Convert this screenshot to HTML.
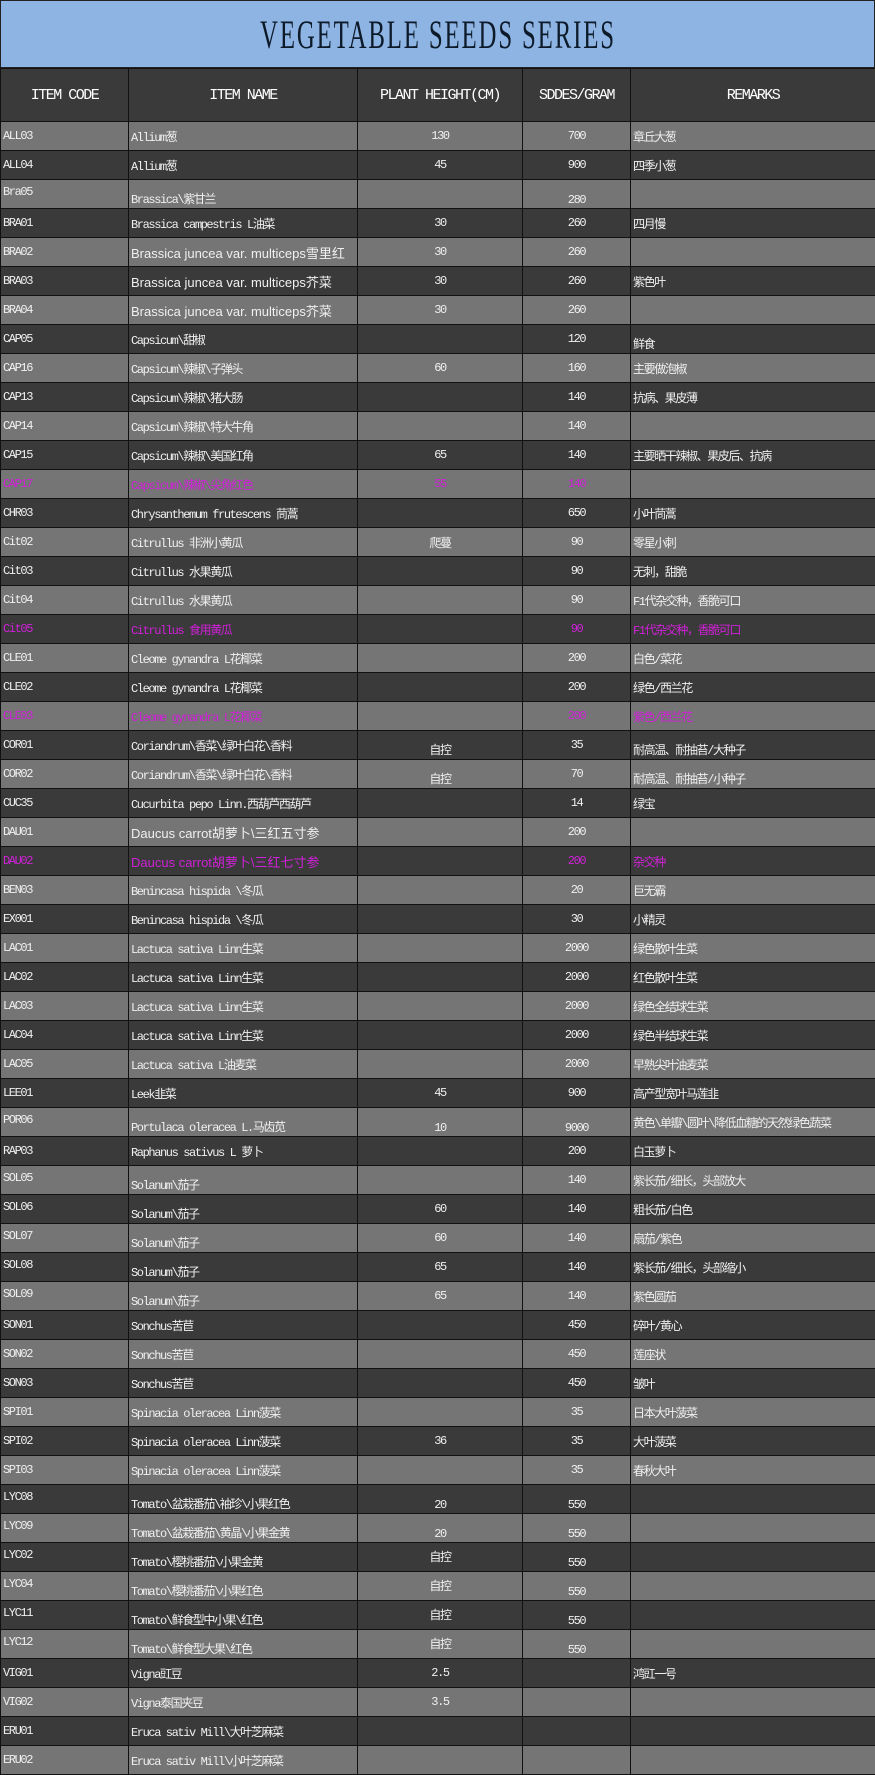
<!DOCTYPE html>
<html><head><meta charset="utf-8"><style>
*{margin:0;padding:0;box-sizing:border-box}
body{width:875px;height:1775px;background:#757575;overflow:hidden}
.title{height:68px;background:#8db4e2;border:1px solid #222;display:flex;align-items:center;justify-content:center}
.title span{font-family:"Liberation Serif",serif;font-size:40px;color:#0d1a2a;transform:scaleX(.62);letter-spacing:3px;white-space:nowrap}
table{border-collapse:collapse;table-layout:fixed;width:875px}
td{border:1px solid #111;height:29px;color:#f0f0f0;font-family:"Liberation Mono","Noto Sans CJK SC",monospace;font-size:12px;letter-spacing:-1.4px;white-space:nowrap;overflow:hidden;padding:0 2px;vertical-align:middle}
tr.h td{height:53px;background:#3a3a3a;color:#fff;font-size:15px;text-align:center;letter-spacing:-1.5px}
tr:nth-child(even) td{background:#757575}
tr:nth-child(odd) td{background:#3a3a3a}
td.c{text-align:center}
td.b{vertical-align:bottom;padding-bottom:1px}
td.t{vertical-align:top;padding-top:5px}
td.s{font-family:"Liberation Sans","Noto Sans CJK SC",sans-serif;font-size:13px;letter-spacing:0}
tr.m td{color:#d020d8}
</style></head><body>
<div class="title"><span>VEGETABLE SEEDS SERIES</span></div>
<table>
<colgroup><col style="width:128px"><col style="width:229px"><col style="width:165px"><col style="width:108px"><col style="width:245px"></colgroup>
<tr class="h"><td>ITEM CODE</td><td>ITEM NAME</td><td>PLANT HEIGHT(CM)</td><td>SDDES/GRAM</td><td>REMARKS</td></tr>
<tr><td>ALL03</td><td>Allium葱</td><td class="c">130</td><td class="c">700</td><td>章丘大葱</td></tr>
<tr><td>ALL04</td><td>Allium葱</td><td class="c">45</td><td class="c">900</td><td>四季小葱</td></tr>
<tr><td class="t">Bra05</td><td class="b">Brassica\紫甘兰</td><td></td><td class="c b">280</td><td></td></tr>
<tr><td>BRA01</td><td>Brassica campestris L油菜</td><td class="c">30</td><td class="c">260</td><td>四月慢</td></tr>
<tr><td>BRA02</td><td class="s">Brassica juncea var. multiceps雪里红</td><td class="c">30</td><td class="c">260</td><td></td></tr>
<tr><td>BRA03</td><td class="s">Brassica juncea var. multiceps芥菜</td><td class="c">30</td><td class="c">260</td><td>紫色叶</td></tr>
<tr><td>BRA04</td><td class="s">Brassica juncea var. multiceps芥菜</td><td class="c">30</td><td class="c">260</td><td></td></tr>
<tr><td>CAP05</td><td>Capsicum\甜椒</td><td></td><td class="c">120</td><td class="b">鲜食</td></tr>
<tr><td>CAP16</td><td>Capsicum\辣椒\子弹头</td><td class="c">60</td><td class="c">160</td><td>主要做泡椒</td></tr>
<tr><td>CAP13</td><td>Capsicum\辣椒\猪大肠</td><td></td><td class="c">140</td><td>抗病、果皮薄</td></tr>
<tr><td>CAP14</td><td>Capsicum\辣椒\特大牛角</td><td></td><td class="c">140</td><td></td></tr>
<tr><td>CAP15</td><td>Capsicum\辣椒\美国红角</td><td class="c">65</td><td class="c">140</td><td>主要晒干辣椒、果皮后、抗病</td></tr>
<tr class="m"><td>CAP17</td><td>Capsicum\辣椒\尖角红色</td><td class="c">55</td><td class="c">140</td><td></td></tr>
<tr><td>CHR03</td><td>Chrysanthemum frutescens 茼蒿</td><td></td><td class="c">650</td><td>小叶茼蒿</td></tr>
<tr><td>Cit02</td><td>Citrullus 非洲小黄瓜</td><td class="c">爬蔓</td><td class="c">90</td><td>零星小刺</td></tr>
<tr><td>Cit03</td><td>Citrullus 水果黄瓜</td><td></td><td class="c">90</td><td>无刺，甜脆</td></tr>
<tr><td>Cit04</td><td>Citrullus 水果黄瓜</td><td></td><td class="c">90</td><td>F1代杂交种，香脆可口</td></tr>
<tr class="m"><td>Cit05</td><td>Citrullus 食用黄瓜</td><td></td><td class="c">90</td><td>F1代杂交种，香脆可口</td></tr>
<tr><td>CLE01</td><td>Cleome gynandra L花椰菜</td><td></td><td class="c">200</td><td>白色/菜花</td></tr>
<tr><td>CLE02</td><td>Cleome gynandra L花椰菜</td><td></td><td class="c">200</td><td>绿色/西兰花</td></tr>
<tr class="m"><td>CLE03</td><td>Cleome gynandra L花椰菜</td><td></td><td class="c">200</td><td>紫色/西兰花</td></tr>
<tr><td>COR01</td><td>Coriandrum\香菜\绿叶白花\香料</td><td class="c b">自控</td><td class="c">35</td><td class="b">耐高温、耐抽苔/大种子</td></tr>
<tr><td>COR02</td><td>Coriandrum\香菜\绿叶白花\香料</td><td class="c b">自控</td><td class="c">70</td><td class="b">耐高温、耐抽苔/小种子</td></tr>
<tr><td>CUC35</td><td>Cucurbita pepo Linn.西葫芦西葫芦</td><td></td><td class="c">14</td><td>绿宝</td></tr>
<tr><td>DAU01</td><td class="s">Daucus carrot胡萝卜\三红五寸参</td><td></td><td class="c">200</td><td></td></tr>
<tr class="m"><td>DAU02</td><td class="s">Daucus carrot胡萝卜\三红七寸参</td><td></td><td class="c">200</td><td>杂交种</td></tr>
<tr><td>BEN03</td><td>Benincasa hispida \冬瓜</td><td></td><td class="c">20</td><td>巨无霸</td></tr>
<tr><td>EX001</td><td>Benincasa hispida \冬瓜</td><td></td><td class="c">30</td><td>小精灵</td></tr>
<tr><td>LAC01</td><td>Lactuca sativa Linn生菜</td><td></td><td class="c">2000</td><td>绿色散叶生菜</td></tr>
<tr><td>LAC02</td><td>Lactuca sativa Linn生菜</td><td></td><td class="c">2000</td><td>红色散叶生菜</td></tr>
<tr><td>LAC03</td><td>Lactuca sativa Linn生菜</td><td></td><td class="c">2000</td><td>绿色全结球生菜</td></tr>
<tr><td>LAC04</td><td>Lactuca sativa Linn生菜</td><td></td><td class="c">2000</td><td>绿色半结球生菜</td></tr>
<tr><td>LAC05</td><td>Lactuca sativa L油麦菜</td><td></td><td class="c">2000</td><td>早熟尖叶油麦菜</td></tr>
<tr><td>LEE01</td><td>Leek韭菜</td><td class="c">45</td><td class="c">900</td><td>高产型宽叶马莲韭</td></tr>
<tr><td class="t">POR06</td><td class="b">Portulaca oleracea L.马齿苋</td><td class="c b">10</td><td class="c b">9000</td><td>黄色\单瓣\圆叶\降低血糖的天然绿色蔬菜</td></tr>
<tr><td>RAP03</td><td>Raphanus sativus L 萝卜</td><td></td><td class="c">200</td><td>白玉萝卜</td></tr>
<tr><td class="t">SOL05</td><td class="b">Solanum\茄子</td><td></td><td class="c">140</td><td>紫长茄/细长，头部放大</td></tr>
<tr><td class="t">SOL06</td><td class="b">Solanum\茄子</td><td class="c">60</td><td class="c">140</td><td>粗长茄/白色</td></tr>
<tr><td class="t">SOL07</td><td class="b">Solanum\茄子</td><td class="c">60</td><td class="c">140</td><td>扇茄/紫色</td></tr>
<tr><td class="t">SOL08</td><td class="b">Solanum\茄子</td><td class="c">65</td><td class="c">140</td><td>紫长茄/细长，头部缩小</td></tr>
<tr><td class="t">SOL09</td><td class="b">Solanum\茄子</td><td class="c">65</td><td class="c">140</td><td>紫色圆茄</td></tr>
<tr><td>SON01</td><td>Sonchus苦苣</td><td></td><td class="c">450</td><td>碎叶/黄心</td></tr>
<tr><td>SON02</td><td>Sonchus苦苣</td><td></td><td class="c">450</td><td>莲座状</td></tr>
<tr><td>SON03</td><td>Sonchus苦苣</td><td></td><td class="c">450</td><td>皱叶</td></tr>
<tr><td>SPI01</td><td>Spinacia oleracea Linn菠菜</td><td></td><td class="c">35</td><td>日本大叶菠菜</td></tr>
<tr><td>SPI02</td><td>Spinacia oleracea Linn菠菜</td><td class="c">36</td><td class="c">35</td><td>大叶菠菜</td></tr>
<tr><td>SPI03</td><td>Spinacia oleracea Linn菠菜</td><td></td><td class="c">35</td><td>春秋大叶</td></tr>
<tr><td class="t">LYC08</td><td class="b">Tomato\盆栽番茄\袖珍\小果红色</td><td class="c b">20</td><td class="c b">550</td><td></td></tr>
<tr><td class="t">LYC09</td><td class="b">Tomato\盆栽番茄\黄晶\小果金黄</td><td class="c b">20</td><td class="c b">550</td><td></td></tr>
<tr><td class="t">LYC02</td><td class="b">Tomato\樱桃番茄\小果金黄</td><td class="c t">自控</td><td class="c b">550</td><td></td></tr>
<tr><td class="t">LYC04</td><td class="b">Tomato\樱桃番茄\小果红色</td><td class="c t">自控</td><td class="c b">550</td><td></td></tr>
<tr><td class="t">LYC11</td><td class="b">Tomato\鲜食型中小果\红色</td><td class="c t">自控</td><td class="c b">550</td><td></td></tr>
<tr><td class="t">LYC12</td><td class="b">Tomato\鲜食型大果\红色</td><td class="c t">自控</td><td class="c b">550</td><td></td></tr>
<tr><td>VIG01</td><td>Vigna豇豆</td><td class="c">2.5</td><td></td><td>鸿豇一号</td></tr>
<tr><td>VIG02</td><td>Vigna泰国夹豆</td><td class="c">3.5</td><td></td><td></td></tr>
<tr><td>ERU01</td><td>Eruca sativ Mill\大叶芝麻菜</td><td></td><td></td><td></td></tr>
<tr><td>ERU02</td><td>Eruca sativ Mill\小叶芝麻菜</td><td></td><td></td><td></td></tr>
</table>
</body></html>
